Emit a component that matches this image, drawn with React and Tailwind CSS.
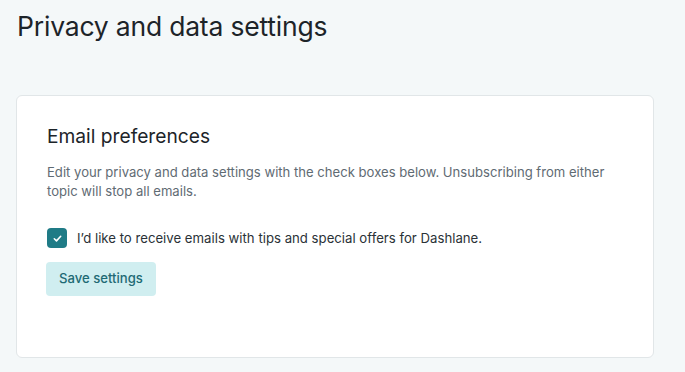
export default function App() {
  return (
    <div className="min-h-[372px] w-full bg-[#f4f8f9] px-4 pt-[10px] font-['Inter',sans-serif] text-[#1d2429]">
      <h1 className="pl-[1px] text-[26.5px] leading-[32px] font-normal tracking-[-0.2px]">Privacy and data settings</h1>

      <div className="mt-[53px] w-[638px] rounded-[6px] border border-[#e1e6e8] bg-white px-[30px] pt-[27px] pb-[61px]">
        <h2 className="text-[19.2px] leading-[26px] text-[#1d2429]">Email preferences</h2>
        <p className="mt-[14px] w-[570px] text-[13.1px] leading-[19px] text-[#5f6b73]">
          Edit your privacy and data settings with the check boxes below. Unsubscribing from either topic will stop all emails.
        </p>

        <label className="mt-[27px] flex items-center gap-[10px]">
          <span className="flex h-[20px] w-[20px] items-center justify-center rounded-[4px] bg-[#1f7b86]">
            <svg width="11" height="11" viewBox="0 0 12 12" fill="none">
              <path d="M2.5 6.3 L4.9 8.6 L9.5 3.6" stroke="white" strokeWidth="1.7" strokeLinecap="round" strokeLinejoin="round" />
            </svg>
          </span>
          <span className="text-[13.2px] leading-[20px] text-[#2a3237]">
            I’d like to receive emails with tips and special offers for Dashlane.
          </span>
        </label>

        <button className="-ml-[1px] mt-[14px] h-[34px] w-[110px] rounded-[4px] bg-[#d0eef0] text-[13.1px] font-medium text-[#1e6a74]">
          Save settings
        </button>
      </div>
    </div>
  );
}
